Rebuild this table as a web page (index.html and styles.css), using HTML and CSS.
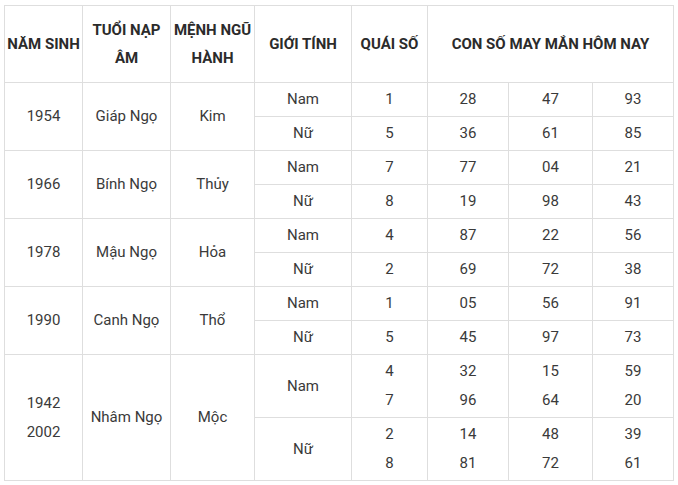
FILE: index.html
```html
<!DOCTYPE html>
<html lang="vi">
<head>
<meta charset="utf-8">
<link rel="stylesheet" href="styles.css">
</head>
<body>
<table class="luck">
  <colgroup>
    <col class="c1"><col class="c2"><col class="c3"><col class="c4"><col class="c5"><col class="c6"><col class="c7"><col class="c8">
  </colgroup>
  <thead>
    <tr>
      <th>NĂM SINH</th>
      <th>TUỔI NẠP<br>ÂM</th>
      <th>MỆNH NGŨ<br>HÀNH</th>
      <th>GIỚI TÍNH</th>
      <th>QUÁI SỐ</th>
      <th colspan="3">CON SỐ MAY MẮN HÔM NAY</th>
    </tr>
  </thead>
  <tbody>
    <tr><td rowspan="2">1954</td><td rowspan="2">Giáp Ngọ</td><td rowspan="2">Kim</td><td>Nam</td><td>1</td><td>28</td><td>47</td><td>93</td></tr>
    <tr><td>Nữ</td><td>5</td><td>36</td><td>61</td><td>85</td></tr>
    <tr><td rowspan="2">1966</td><td rowspan="2">Bính Ngọ</td><td rowspan="2">Thủy</td><td>Nam</td><td>7</td><td>77</td><td>04</td><td>21</td></tr>
    <tr><td>Nữ</td><td>8</td><td>19</td><td>98</td><td>43</td></tr>
    <tr><td rowspan="2">1978</td><td rowspan="2">Mậu Ngọ</td><td rowspan="2">Hỏa</td><td>Nam</td><td>4</td><td>87</td><td>22</td><td>56</td></tr>
    <tr><td>Nữ</td><td>2</td><td>69</td><td>72</td><td>38</td></tr>
    <tr><td rowspan="2">1990</td><td rowspan="2">Canh Ngọ</td><td rowspan="2">Thổ</td><td>Nam</td><td>1</td><td>05</td><td>56</td><td>91</td></tr>
    <tr><td>Nữ</td><td>5</td><td>45</td><td>97</td><td>73</td></tr>
    <tr><td rowspan="2">1942<br>2002</td><td rowspan="2">Nhâm Ngọ</td><td rowspan="2">Mộc</td><td>Nam</td><td>4<br>7</td><td>32<br>96</td><td>15<br>64</td><td>59<br>20</td></tr>
    <tr><td>Nữ</td><td>2<br>8</td><td>14<br>81</td><td>48<br>72</td><td>39<br>61</td></tr>
  </tbody>
</table>
</body>
</html>
```
FILE: styles.css
```css
html, body {
  margin: 0;
  padding: 0;
  background: #ffffff;
}
body {
  padding: 5px 0 0 4px;
  font-family: Roboto, "Liberation Sans", sans-serif;
}
.luck {
  border-collapse: collapse;
  table-layout: fixed;
  width: 669px;
  color: #3a3a3a;
  font-size: 15px;
}
.c1 { width: 78px; }
.c2 { width: 88px; }
.c3 { width: 84px; }
.c4 { width: 97px; }
.c5 { width: 76px; }
.c6 { width: 81px; }
.c7 { width: 84px; }
.c8 { width: 81px; }
.luck th,
.luck td {
  border: 1px solid #dedede;
  text-align: center;
  vertical-align: middle;
}
.luck th {
  font-weight: 700;
  color: #2b2b2b;
  line-height: 28px;
  padding: 10px 2px;
}
.luck td {
  font-weight: 400;
  line-height: 29px;
  padding: 2px 2px;
}
```
